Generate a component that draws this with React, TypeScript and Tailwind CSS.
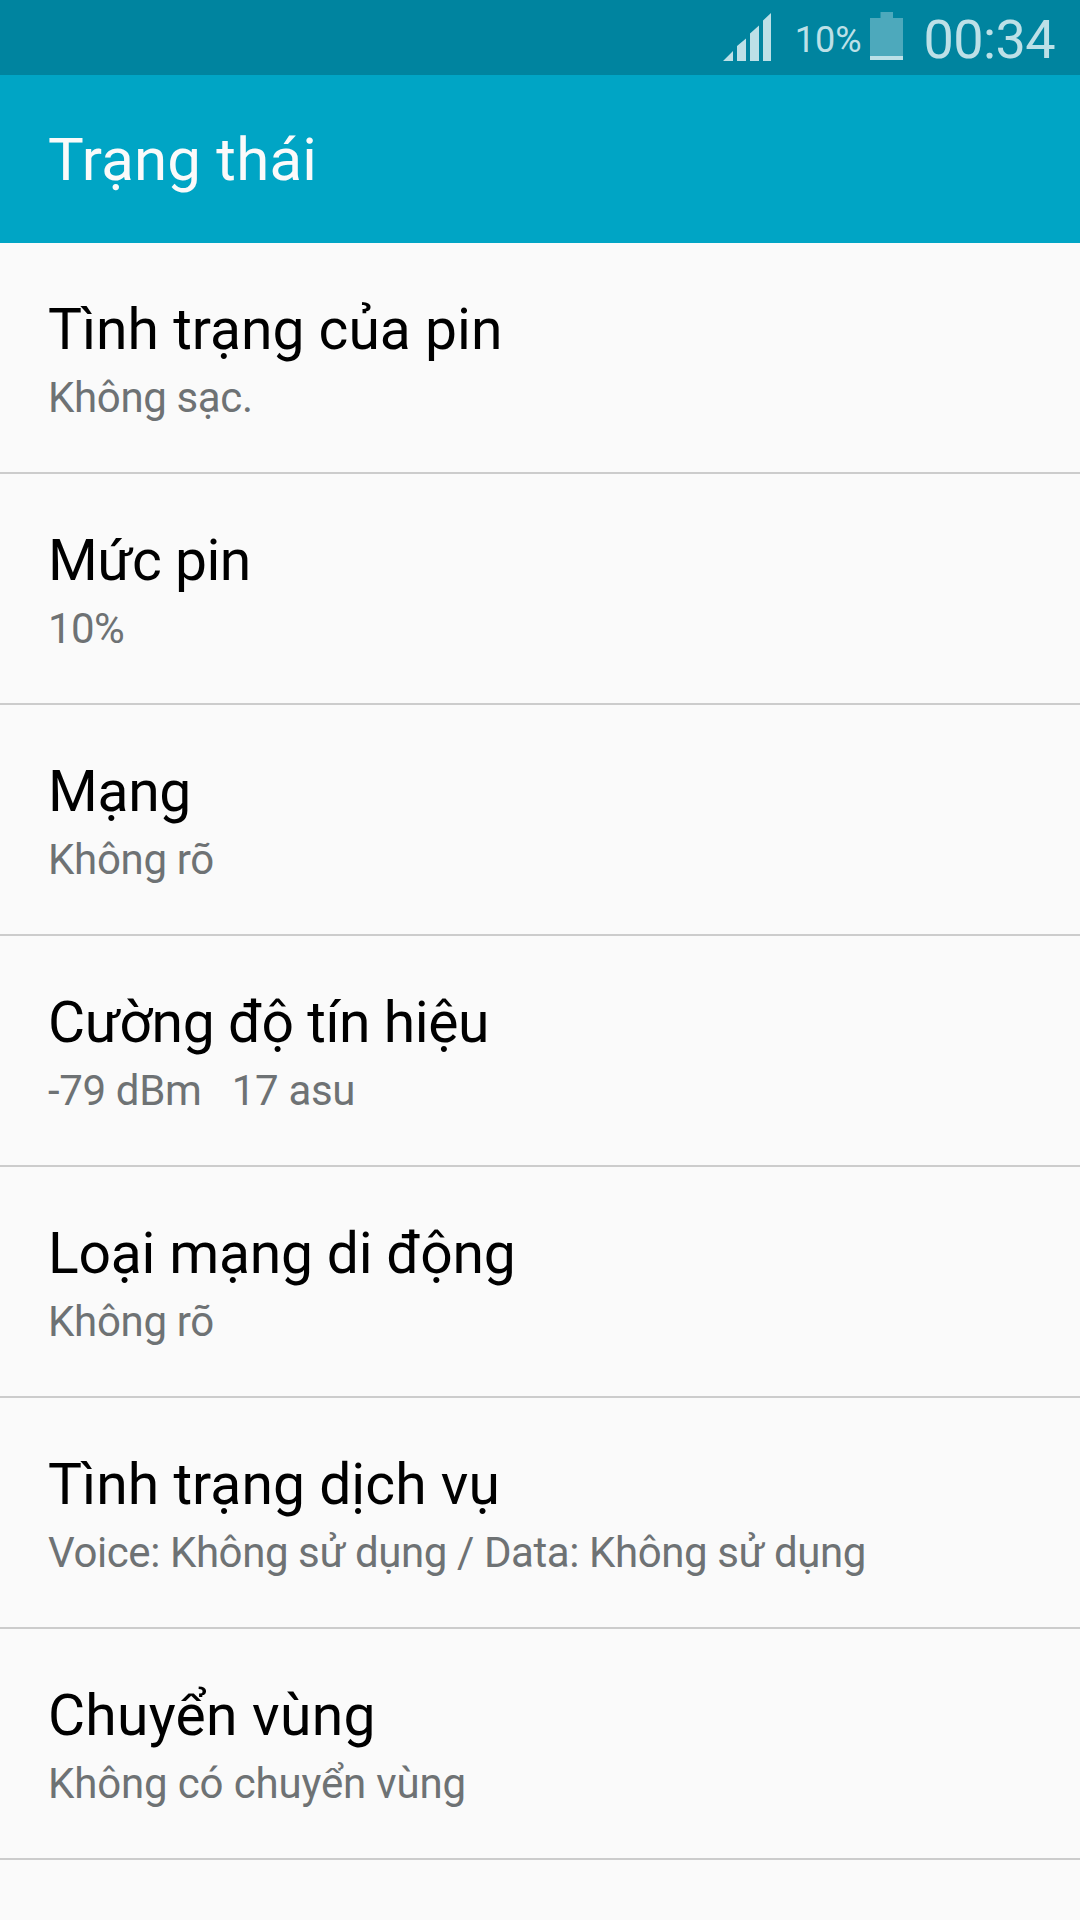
const rows = [
  { title: "Tình trạng của pin", value: "Không sạc.", titleSpacing: "tracking-normal", valueSpacing: "tracking-[-0.35px]" },
  { title: "Mức pin", value: "10%", titleSpacing: "tracking-[-0.5px]", valueSpacing: "tracking-[-0.6px]" },
  { title: "Mạng", value: "Không rõ", titleSpacing: "tracking-[-0.3px]", valueSpacing: "tracking-[-0.3px]" },
  { title: "Cường độ tín hiệu", value: "-79 dBm   17 asu", titleSpacing: "tracking-[-0.45px]", valueSpacing: "tracking-[-0.34px]" },
  { title: "Loại mạng di động", value: "Không rõ", titleSpacing: "tracking-[-0.2px]", valueSpacing: "tracking-[-0.3px]" },
  { title: "Tình trạng dịch vụ", value: "Voice: Không sử dụng / Data: Không sử dụng", titleSpacing: "tracking-[0.05px]", valueSpacing: "tracking-[-0.41px]" },
  { title: "Chuyển vùng", value: "Không có chuyển vùng", titleSpacing: "tracking-[0.25px]", valueSpacing: "tracking-[-0.15px]" },
];

export default function App() {
  return (
    <div className="flex h-[1920px] w-[1080px] flex-col overflow-hidden bg-[#fafafa] font-['Roboto',sans-serif]">
      <div className="flex h-[75px] shrink-0 items-center justify-end bg-[#00849f] pr-[25px] text-[#bde0e7]">
        <svg className="mr-[23px] h-[75px] w-[50px]" viewBox="722 0 50 75" fill="currentColor">
          <path d="M723 61L733 51V61ZM737 46L746 38.5V61H737ZM750 33.5L759 25.5V61H750ZM763 20.5L771 13V61H763Z" />
        </svg>
        <span className="mr-[8px] pt-[5px] text-[36px] leading-[75px]">10%</span>
        <svg className="mr-[21px] h-[75px] w-[33px]" viewBox="870 0 33 75">
          <path d="M880.5 12H893V18H903V60H870V18H880.5Z" fill="#4da9bc" />
          <path d="M870 56H903V60H870Z" fill="currentColor" />
        </svg>
        <span className="pt-[3px] text-[54px] leading-[75px] tracking-[-0.6px]">00:34</span>
      </div>
      <header className="flex h-[168px] shrink-0 items-center bg-[#00a5c5] pt-[2px] pl-[48px] text-[60px] tracking-[0.2px] text-[#fafafa]">Trạng thái</header>
      <main>
        {rows.map(({ title, value, titleSpacing, valueSpacing }) => (
          <section key={title} className="h-[231px] border-b-2 border-[#cccccc] pt-[50px] pl-[48px]">
            <h2 className={`text-[57px] leading-[74px] text-black ${titleSpacing}`}>{title}</h2>
            <p className={`text-[42px] leading-[62px] whitespace-pre text-[#6e7274] ${valueSpacing}`}>{value}</p>
          </section>
        ))}
      </main>
    </div>
  );
}
